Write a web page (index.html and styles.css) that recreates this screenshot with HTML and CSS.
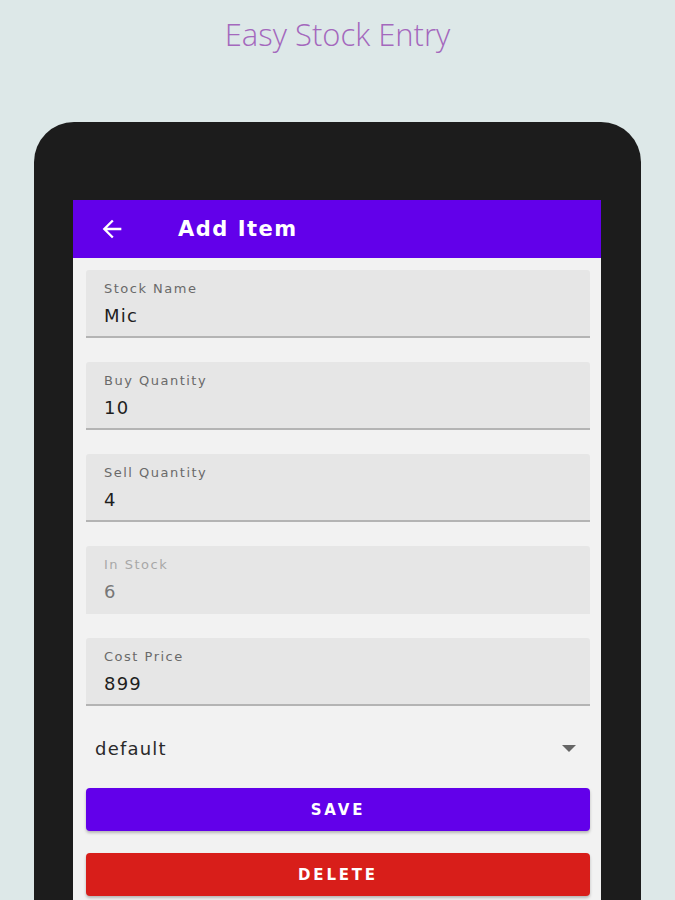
FILE: index.html
```html
<!DOCTYPE html>
<html>
<head>
<meta charset="utf-8">
<link rel="stylesheet" href="styles.css">
</head>
<body>
<div class="title">Easy Stock Entry</div>
<div class="device">
  <div class="screen">
    <div class="appbar">
      <svg class="back" width="24" height="24" viewBox="0 0 24 24"><path d="M20 11H7.83l5.59-5.59L12 4l-8 8 8 8 1.41-1.41L7.83 13H20v-2z" fill="#fff"/></svg>
      <span class="appbar-title">Add Item</span>
    </div>
    <div class="form">
      <div class="field"><div class="label">Stock Name</div><div class="value">Mic</div></div>
      <div class="field"><div class="label">Buy Quantity</div><div class="value">10</div></div>
      <div class="field"><div class="label">Sell Quantity</div><div class="value">4</div></div>
      <div class="field disabled"><div class="label">In Stock</div><div class="value">6</div></div>
      <div class="field"><div class="label">Cost Price</div><div class="value">899</div></div>
      <div class="dropdown"><span>default</span><svg width="14" height="7" viewBox="0 0 14 7"><path d="M0 0h14L7 7z" fill="#666"/></svg></div>
      <button class="btn save">SAVE</button>
      <button class="btn delete">DELETE</button>
    </div>
  </div>
</div>
</body>
</html>
```
FILE: styles.css
```css
html, body { margin: 0; padding: 0; }
body {
  background: #dde8e8;
  height: 900px;
  overflow: hidden;
  font-family: "DejaVu Sans", Roboto, sans-serif;
}
.title {
  height: 122px;
  box-sizing: border-box;
  padding-top: 13px;
  text-align: center;
  font-family: "Open Sans", sans-serif;
  font-weight: 300;
  font-size: 31px;
  color: #a468bd;
  line-height: 42px;
}
.device {
  margin: 0 34px;
  background: #1c1c1c;
  border-radius: 40px 40px 0 0;
  padding: 78px 40px 0 39px;
  height: 800px;
}
.screen {
  background: #f2f2f2;
  height: 720px;
}
.appbar {
  height: 58px;
  background: #6200ea;
  display: flex;
  align-items: center;
  padding-left: 25px;
}
.back { width: 28px; height: 28px; }
.appbar-title {
  margin-left: 52px;
  color: #fff;
  font-weight: 700;
  font-size: 21px;
  letter-spacing: 1.5px;
}
.form {
  padding: 12px 11px 0 13px;
  display: flex;
  flex-direction: column;
}
.field {
  height: 68px;
  box-sizing: border-box;
  background: #e6e6e6;
  border-bottom: 2px solid #b4b4b4;
  border-radius: 3px 3px 0 0;
  margin-bottom: 24px;
  padding: 11px 18px 0;
}
.field.disabled { border-bottom-color: transparent; }
.label {
  font-size: 13px;
  color: #6a6a6a;
  letter-spacing: 1.5px;
  line-height: 16px;
}
.value {
  margin-top: 8px;
  font-size: 18px;
  color: #1e1e1e;
  letter-spacing: 1.2px;
  line-height: 22px;
}
.disabled .label { color: #a8a8a8; }
.disabled .value { color: #777; }
.dropdown {
  margin-top: -6px;
  height: 48px;
  display: flex;
  align-items: center;
  justify-content: space-between;
  padding: 0 14px 0 9px;
  font-size: 18px;
  letter-spacing: 1.2px;
  color: #2a2a2a;
}
.btn {
  height: 43px;
  border: none;
  border-radius: 4px;
  color: #fff;
  font-family: "DejaVu Sans", sans-serif;
  font-weight: 700;
  font-size: 15px;
  letter-spacing: 2.8px;
  box-shadow: 0 2px 3px rgba(0,0,0,0.25);
}
.save { background: #6200ea; margin-top: 16px; }
.delete { background: #d81e1a; margin-top: 22px; }
```
